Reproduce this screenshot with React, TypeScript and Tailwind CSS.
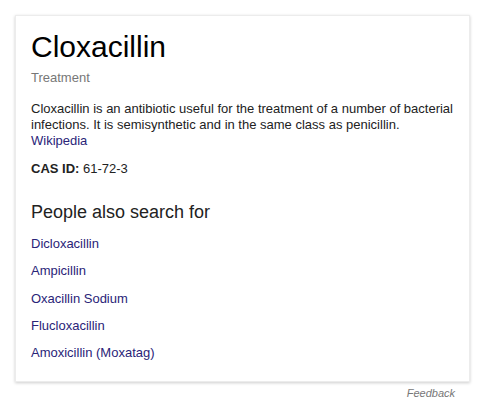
import React from "react";

const links = [
  "Dicloxacillin",
  "Ampicillin",
  "Oxacillin Sodium",
  "Flucloxacillin",
  "Amoxicillin (Moxatag)",
];

export default function App() {
  return (
    <div
      className="w-[488px] h-[415px] bg-white pt-[15px] pl-[15px]"
      style={{ fontFamily: '"Liberation Sans", Arial, sans-serif' }}
    >
      <div className="w-[455px] h-[367px] bg-white shadow-[0_1px_3px_rgba(0,0,0,0.2)] border border-[#ececec] px-[15px] pt-[13px]">
        <div className="text-[30px] leading-[36px] text-[#000]">Cloxacillin</div>
        <div className="text-[13px] leading-[16px] text-[#777] mt-[5px]">Treatment</div>
        <div className="text-[13px] leading-[16px] text-[#222] mt-[15px]">
          Cloxacillin is an antibiotic useful for the treatment of a number of bacterial infections. It is
          semisynthetic and in the same class as penicillin.{" "}
          <div className="text-[#2a2478]">Wikipedia</div>
        </div>
        <div className="text-[13px] leading-[16px] text-[#222] mt-[12px]">
          <span className="font-bold">CAS ID:</span> 61-72-3
        </div>
        <div className="text-[18px] leading-[24px] text-[#222] mt-[23px]">People also search for</div>
        <div className="flex flex-col mt-[6px] gap-[0.25px]">
          {links.map((l) => (
            <div key={l} className="text-[13px] leading-[27px] text-[#2a2478]">
              {l}
            </div>
          ))}
        </div>
      </div>
      <div className="w-[455px] text-right pr-[15px] text-[11px] leading-[14px] italic text-[#777] mt-[4px]">
        Feedback
      </div>
    </div>
  );
}
